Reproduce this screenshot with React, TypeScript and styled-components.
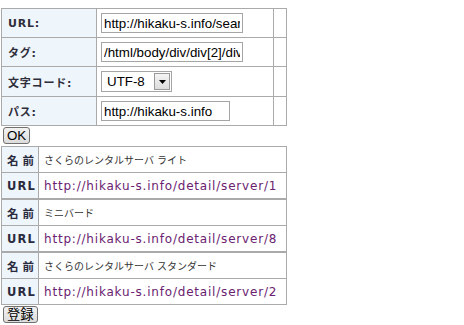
import React from 'react';
import styled, { createGlobalStyle } from 'styled-components';

const GlobalStyle = createGlobalStyle`
  body {
    margin: 0;
    padding: 8px 0 0 1px;
    background: #fff;
    color: #333;
    font-family: "DejaVu Sans", "Noto Sans CJK JP", sans-serif;
  }
`;

const results = [
  { name: 'さくらのレンタルサーバ ライト', url: 'http://hikaku-s.info/detail/server/1' },
  { name: 'ミニバード', url: 'http://hikaku-s.info/detail/server/8' },
  { name: 'さくらのレンタルサーバ スタンダード', url: 'http://hikaku-s.info/detail/server/2' },
];

const App: React.FC = () => {
  return (
    <>
      <GlobalStyle />
      <form>
        <FormTable>
          <colgroup>
            <Col $w={95} />
            <Col $w={177} />
            <Col $w={13} />
          </colgroup>
          <tbody>
            <Row $h={29}>
              <Label>URL:</Label>
              <Field>
                <TextInput $w={142} defaultValue="http://hikaku-s.info/search/" />
              </Field>
              <Empty />
            </Row>
            <Row $h={29}>
              <Label>タグ:</Label>
              <Field>
                <TextInput $w={142} defaultValue="/html/body/div/div[2]/div[1]/a" />
              </Field>
              <Empty />
            </Row>
            <Row $h={30}>
              <Label>文字コード:</Label>
              <Field>
                <SelectBox>
                  <Select defaultValue="UTF-8">
                    <option>UTF-8</option>
                    <option>Shift_JIS</option>
                    <option>EUC-JP</option>
                  </Select>
                  <Arrow>
                    <svg width="7" height="4" viewBox="0 0 7 4">
                      <path d="M0 0h7L3.5 4z" fill="#000" />
                    </svg>
                  </Arrow>
                </SelectBox>
              </Field>
              <Empty />
            </Row>
            <Row $h={29}>
              <Label>パス:</Label>
              <Field>
                <TextInput $w={129} defaultValue="http://hikaku-s.info" />
              </Field>
              <Empty />
            </Row>
          </tbody>
        </FormTable>
        <Button type="button">OK</Button>
      </form>

      <Results>
        {results.map((r) => (
          <ResultTable key={r.url}>
            <colgroup>
              <Col $w={37} />
              <Col $w={248} />
            </colgroup>
            <tbody>
              <ResultRow>
                <Key $spacing={4}>名前</Key>
                <Name>{r.name}</Name>
              </ResultRow>
              <ResultRow>
                <Key $spacing={1.2}>URL</Key>
                <Link>{r.url}</Link>
              </ResultRow>
            </tbody>
          </ResultTable>
        ))}
      </Results>
      <Button type="button">登録</Button>
    </>
  );
};

export default App;

const FormTable = styled.table`
  border-collapse: collapse;
  table-layout: fixed;
  width: 286px;
`;

const Col = styled.col<{ $w: number }>`
  width: ${(p) => p.$w}px;
`;

const Row = styled.tr<{ $h: number }>`
  height: ${(p) => p.$h}px;
`;

const Label = styled.th`
  border: 1px solid #aaa;
  background: #eef5fb;
  padding: 0 6px;
  text-align: left;
  font-size: 11px;
  font-weight: bold;
  letter-spacing: 0.8px;
  color: #2e2e3a;
  white-space: nowrap;
`;

const Field = styled.td`
  border: 1px solid #aaa;
  padding: 0 4px;
`;

const Empty = styled.td`
  border: 1px solid #aaa;
  padding: 0;
`;

const TextInput = styled.input<{ $w: number }>`
  display: block;
  box-sizing: border-box;
  width: ${(p) => p.$w}px;
  height: 20px;
  margin: 0;
  padding: 1px 2px;
  border: 1px solid #a5a5a5;
  font-family: "Liberation Sans", Arial, sans-serif;
  font-size: 13.33px;
  color: #000;
  outline: none;
`;

const SelectBox = styled.div`
  position: relative;
  width: 71px;
  height: 21px;
`;

const Select = styled.select`
  box-sizing: border-box;
  width: 71px;
  height: 21px;
  margin: 0;
  padding: 0 0 0 5px;
  border: 1px solid #a5a5a5;
  background: #fff;
  appearance: none;
  font-family: "Liberation Sans", Arial, sans-serif;
  font-size: 13.33px;
  color: #000;
  outline: none;
`;

const Arrow = styled.span`
  position: absolute;
  top: 2px;
  right: 2px;
  box-sizing: border-box;
  width: 16px;
  height: 17px;
  display: flex;
  align-items: center;
  justify-content: center;
  background: linear-gradient(#f4f4f4, #dcdcdc);
  border: 1px solid #9a9a9a;
  pointer-events: none;
`;

const Button = styled.button`
  display: block;
  margin: 1px 0 0 2px;
  height: 17px;
  padding: 0 3px;
  border: 1px solid #707070;
  border-radius: 3px;
  background: linear-gradient(#f2f2f2, #dcdcdc);
  font-family: "Liberation Sans", "Noto Sans CJK JP", Arial, sans-serif;
  font-size: 13.33px;
  line-height: 15px;
  color: #000;
`;

const Results = styled.div`
  margin-top: 2px;
`;

const ResultTable = styled.table`
  border-collapse: collapse;
  table-layout: fixed;
  width: 286px;
`;

const ResultRow = styled.tr`
  height: 26px;
`;

const Key = styled.th<{ $spacing: number }>`
  border: 1px solid #aaa;
  background: #eef5fb;
  padding: 0 0 0 5px;
  text-align: left;
  font-size: 11.5px;
  font-weight: bold;
  letter-spacing: ${(p) => p.$spacing}px;
  color: #2b2b40;
  white-space: nowrap;
`;

const Name = styled.td`
  border: 1px solid #aaa;
  padding: 0 5px;
  font-size: 10px;
  color: #333;
  white-space: nowrap;
`;

const Link = styled.td`
  border: 1px solid #aaa;
  padding: 0 5px;
  font-size: 12px;
  letter-spacing: 0.8px;
  color: #6a2270;
  white-space: nowrap;
`;
